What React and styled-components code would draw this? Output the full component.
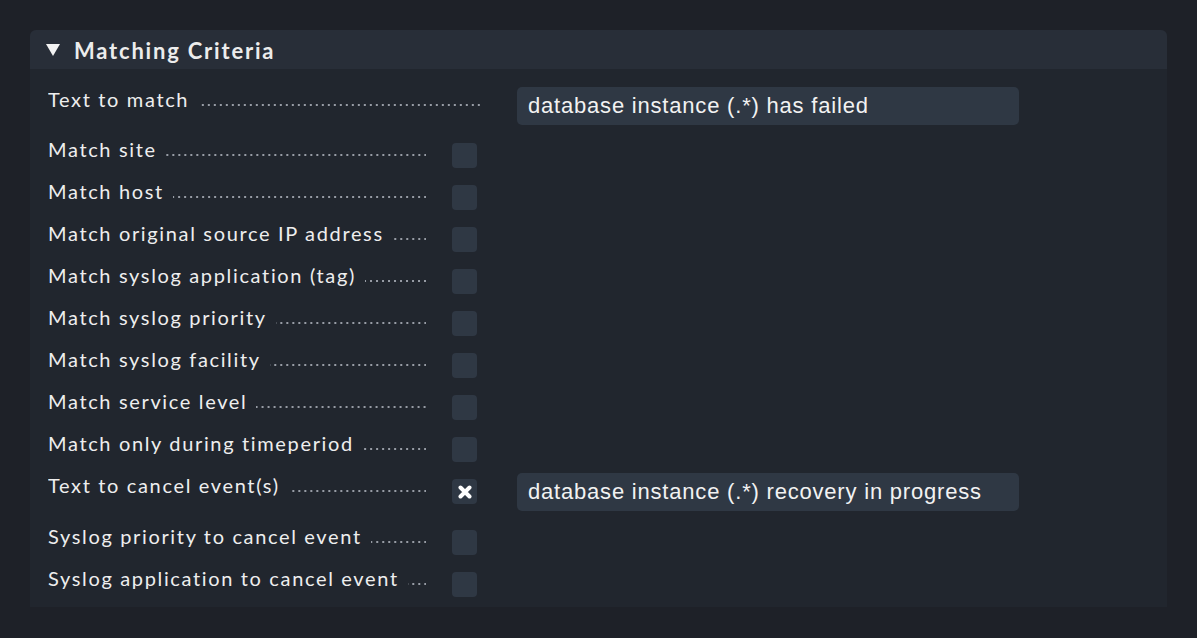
import React from 'react';
import styled, { createGlobalStyle } from 'styled-components';

const GlobalStyle = createGlobalStyle`
  html, body {
    margin: 0;
    padding: 0;
    background: #1e2128;
  }
  * {
    box-sizing: border-box;
  }
`;

const Page = styled.div`
  width: 1197px;
  height: 638px;
  padding: 30px 30px 0 30px;
  overflow: hidden;
`;

const Panel = styled.section`
  height: 577px;
  background: #21262e;
  border-radius: 6px 6px 0 0;
  overflow: hidden;
`;

const Header = styled.div`
  height: 39px;
  display: flex;
  align-items: center;
  padding: 1px 0 0 16px;
  background: #282e38;
`;

const Toggle = styled.span`
  width: 0;
  height: 0;
  border-left: 7.5px solid transparent;
  border-right: 7.5px solid transparent;
  border-top: 12px solid #f2f2f2;
  margin-right: 14px;
`;

const Title = styled.h2`
  margin: 0;
  font-family: Lato, "Open Sans", sans-serif;
  font-size: 22px;
  font-weight: 700;
  letter-spacing: 1.8px;
  color: #ececec;
`;

const Body = styled.div`
  padding: 18px 0 0 18px;
`;

const Row = styled.div`
  display: flex;
  align-items: flex-start;
  margin-bottom: ${p => p.$gap}px;
`;

const LabelCell = styled.div`
  width: ${p => (p.$wide ? 432 : 378)}px;
  display: flex;
  align-items: flex-start;
  overflow: hidden;
  flex-shrink: 0;
`;

const LabelText = styled.span`
  font-family: Lato, "Open Sans", sans-serif;
  font-size: 20px;
  line-height: 24px;
  letter-spacing: 1.65px;
  color: #eeeeee;
  white-space: nowrap;
`;

const Leader = styled.span`
  flex: 1;
  min-width: 0;
  height: 2px;
  margin: 17px 0 0 9px;
  background-image: radial-gradient(circle at 1px 1px, #979ca5 1px, transparent 1.3px);
  background-size: 6px 2px;
  background-repeat: repeat-x;
  background-position: calc(100% + 4px) top;
`;

const Checkbox = styled.span`
  width: 25px;
  height: 25px;
  margin: 6px 0 0 26px;
  border-radius: 4px;
  background: #2f3844;
  display: flex;
  align-items: center;
  justify-content: center;
  flex-shrink: 0;
`;

const ValueInput = styled.div`
  width: 502px;
  height: 38px;
  margin-left: ${p => (p.$wide ? 37 : 40)}px;
  padding-left: 11px;
  border-radius: 5px;
  background: #2f3844;
  display: flex;
  align-items: center;
  font-family: "Liberation Sans", Arial, sans-serif;
  font-size: 22px;
  letter-spacing: 0.8px;
  color: #f2f2f2;
  white-space: nowrap;
`;

const CrossMark = () => (
  <svg width="14" height="14" viewBox="0 0 14 14">
    <path d="M2.5 2.5 L11.5 11.5 M11.5 2.5 L2.5 11.5" stroke="#ffffff" strokeWidth="4" strokeLinecap="round" />
  </svg>
);

const rows = [
  { label: 'Text to match', value: 'database instance (.*) has failed', noBox: true, gap: 12 },
  { label: 'Match site' },
  { label: 'Match host' },
  { label: 'Match original source IP address' },
  { label: 'Match syslog application (tag)' },
  { label: 'Match syslog priority' },
  { label: 'Match syslog facility' },
  { label: 'Match service level' },
  { label: 'Match only during timeperiod' },
  { label: 'Text to cancel event(s)', value: 'database instance (.*) recovery in progress', checked: true, gap: 13 },
  { label: 'Syslog priority to cancel event' },
  { label: 'Syslog application to cancel event' },
];

export default function App() {
  return (
    <Page>
      <GlobalStyle />
      <Panel>
        <Header>
          <Toggle />
          <Title>Matching Criteria</Title>
        </Header>
        <Body>
          {rows.map(r => (
            <Row key={r.label} $gap={r.gap ?? 11}>
              <LabelCell $wide={r.noBox}>
                <LabelText>{r.label}</LabelText>
                <Leader />
              </LabelCell>
              {!r.noBox && <Checkbox>{r.checked && <CrossMark />}</Checkbox>}
              {r.value && <ValueInput $wide={r.noBox}>{r.value}</ValueInput>}
            </Row>
          ))}
        </Body>
      </Panel>
    </Page>
  );
}
